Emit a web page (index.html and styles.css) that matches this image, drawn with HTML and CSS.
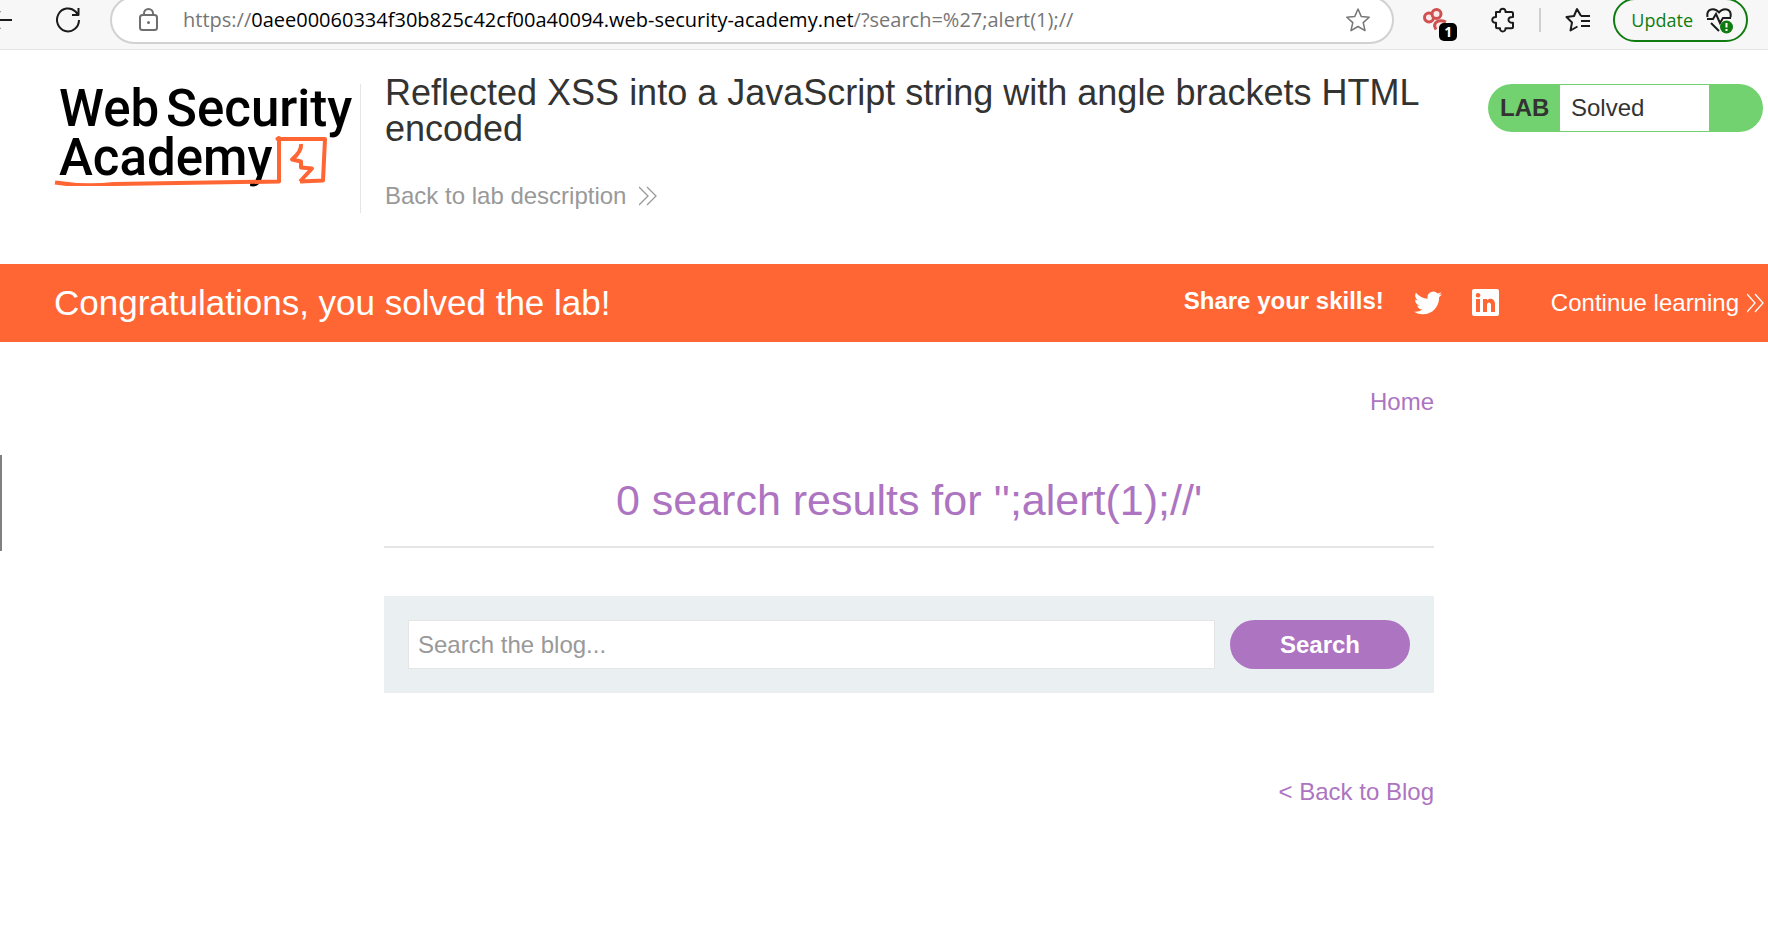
FILE: index.html
```html
<!DOCTYPE html>
<html lang="en">
<head>
<meta charset="utf-8">
<title>Reflected XSS into a JavaScript string with angle brackets HTML encoded</title>
<link rel="stylesheet" href="styles.css">
</head>
<body>
<div class="toolbar">
  <button class="tool back" aria-label="Back"><svg width="24" height="24" viewBox="0 0 24 24"><path d="M23 12H2M11 3l-9 9 9 9"/></svg></button>
  <button class="tool reload" aria-label="Refresh"><svg width="26" height="26" viewBox="0 0 26 26"><path d="M24 13A11 11.500 0 1 1 20.500 4.500L23 7.500M23.500 1v7H17"/></svg></button>
  <div class="address">
    <svg class="lock" width="20" height="24" viewBox="0 0 20 24"><rect x="1" y="7" width="17" height="15" rx="2.500"/><path d="M5 7V5.500a4.500 4.500 0 0 1 9 0V7"/><circle class="dot" cx="9.500" cy="14.500" r="1.500"/></svg>
    <div class="url">https://<span class="host">0aee00060334f30b825c42cf00a40094.web-security-academy.net</span>/?search=%27;alert(1);//</div>
    <button class="tool star" aria-label="Add to favorites"><svg width="26" height="26" viewBox="0 0 26 26"><path d="M13 2l3.200 7.400 8 .8-6 5.400 1.800 8L13 19.500l-7 4.100 1.800-8-6-5.400 8-.8z"/></svg></button>
  </div>
  <button class="tool extension" aria-label="Extension, 1 item"><svg width="36" height="34" viewBox="0 0 36 34"><g class="ext-shape"><path d="M15 26.500C11 20 17 15.500 25 19"/><circle cx="8" cy="14.500" r="4.500"/><circle cx="15.500" cy="11" r="4.500"/></g></svg><span class="count">1</span></button>
  <button class="tool puzzle" aria-label="Extensions"><svg width="24" height="26" viewBox="0 0 24 26"><path d="M5 5h4c-.4-4.500 6-4.500 5.500 0h6c1 0 1.500.5 1.500 1.500V10c-6-.8-6 6.500 0 5.700v4c0 1-.5 1.500-1.500 1.500h-6c.5 4.300-6 4.300-5.500 0H6.500c-1 0-1.500-.5-1.500-1.500v-4c-5 .4-5-6 0-5.700z"/></svg></button>
  <span class="rule"></span>
  <button class="tool favs" aria-label="Favorites"><svg width="26" height="26" viewBox="0 0 26 26"><path d="M16 9l-4-7-3 7-7.500 1 5.500 5.500L5.500 23.500l7-4M16 9h9M16 14h9M16 19h9"/></svg></button>
  <button class="update">Update
    <svg width="28" height="30" viewBox="0 0 28 30"><path d="M1.500 12C0 3 9 2.500 13 7.500 17 2.500 26 3 24.500 12M5 18l8 8M1 14h6l3-5 4 9 3-5h8"/><circle class="alert" cx="20.500" cy="22" r="6.500"/><path class="mark" d="M20.500 18v4.500M20.500 24v2"/></svg>
  </button>
</div>

<header class="lab">
  <a class="logo" href="#" aria-label="Web Security Academy">
    <span class="logo-line"><span>Web</span><span>Security</span></span>
    <span class="logo-line"><span>Academy</span></span>
    <svg class="logo-mark" width="276" height="52" viewBox="0 0 276 52"><path class="sweep" d="M1 48.500Q30 53 60 50L225 47.500V4L223.500 5H271L269 46.500 246 47.500"/><path class="bolt" d="M247 10Q248 17 238 25.500L247 27.500V33.500L258 34.500 246 47.500"/></svg>
  </a>
  <div class="intro">
    <h2>Reflected XSS into a JavaScript string with angle brackets HTML encoded</h2>
    <a class="description" href="#">Back to lab description <svg class="chevrons" width="18" height="20" viewBox="0 0 18 20"><path d="M0 1l9 9-9 9M8 1l9 9-9 9"/></svg></a>
  </div>
  <div class="status"><strong>LAB</strong><p>Solved</p></div>
</header>

<section class="banner">
  <h4>Congratulations, you solved the lab!</h4>
  <div class="share">
    <strong>Share your skills!</strong>
    <a href="#" aria-label="Share on Twitter"><svg width="28" height="28" viewBox="0 0 24 24"><path d="M24 4.600a10 10 0 0 1-2.800.8 5 5 0 0 0 2.100-2.700 10 10 0 0 1-3.100 1.200 4.900 4.900 0 0 0-8.400 4.500A14 14 0 0 1 1.700 3.200a4.900 4.900 0 0 0 1.500 6.500 5 5 0 0 1-2.200-.6v.1a4.900 4.900 0 0 0 3.900 4.800 5 5 0 0 1-2.200.1 4.900 4.900 0 0 0 4.600 3.400A10 10 0 0 1 0 19.500a14 14 0 0 0 7.500 2.200c9.100 0 14-7.500 14-14v-.6A10 10 0 0 0 24 4.600z"/></svg></a>
    <a href="#" aria-label="Share on LinkedIn"><svg width="28" height="28" viewBox="0 0 28 28"><path fill-rule="evenodd" d="M2 0h23q2 0 2 2v23q0 2-2 2H2q-2 0-2-2V2Q0 0 2 0zM4 10v13h4V10zM6 4a2.300 2.300 0 1 0 .1 0zM11 10v13h4v-7c0-3.500 4-3.500 4 0v7h4v-8c0-6-6-6.500-8-3.500V10z"/></svg></a>
  </div>
  <a class="continue" href="#">Continue learning <svg class="chevrons" width="18" height="20" viewBox="0 0 18 20"><path d="M0 1l8 9-8 9M8 1l8 9-8 9"/></svg></a>
</section>

<main class="page">
  <span class="edge"></span>
  <div class="content">
    <nav class="links"><a href="#">Home</a></nav>
    <h1>0 search results for '';alert(1);//'</h1>
    <form class="search">
      <input type="text" placeholder="Search the blog..." aria-label="Search the blog">
      <button type="button">Search</button>
    </form>
    <nav class="links blog"><a href="#">&lt; Back to Blog</a></nav>
  </div>
</main>
</body>
</html>
```
FILE: styles.css
```css
* { box-sizing: border-box; }
body {
  margin: 0;
  background: #fff;
  color: #333332;
  font-family: "Liberation Sans", Arial, sans-serif;
  font-size: 24px;
  line-height: 28px;
}
h1, h2, h4, p { margin: 0; font-weight: 400; }
a { text-decoration: none; color: inherit; }
button { font: inherit; border: 0; padding: 0; background: none; }
svg { display: block; flex: none; }

/* Browser toolbar */
.toolbar {
  display: flex;
  align-items: center;
  height: 50px;
  padding-right: 20px;
  padding-bottom: 9px;
  background: #f7f7f7;
  border-bottom: 1px solid #e5e5e5;
  overflow: hidden;
}
.tool { flex: none; position: relative; }
.tool svg, .lock { fill: none; stroke: #1b1b1b; stroke-width: 2; stroke-linejoin: round; }
.back { margin-left: -11px; }
.reload { margin-left: 42px; }
.address {
  display: flex;
  flex: 1;
  align-items: center;
  min-width: 0;
  height: 48px;
  margin-left: 29px;
  padding: 0 21px 0 27px;
  background: #fff;
  border: 2px solid #d1d1d1;
  border-radius: 24px;
}
.lock { stroke: #6e6e6e; }
.lock .dot { fill: #6e6e6e; stroke: none; }
.url {
  flex: 1;
  margin-left: 24px;
  color: #767676;
  font-family: "Open Sans", "Noto Sans", sans-serif;
  font-size: 20px;
  white-space: nowrap;
}
.host { color: #000; }
.tool.star svg { stroke: #767676; stroke-width: 1.5; }
.extension { margin-left: 27px; }
.extension .ext-shape { fill: #fbeaea; stroke: #cf5050; stroke-width: 3; }
.count {
  position: absolute;
  right: 0;
  bottom: -4px;
  width: 18px;
  height: 18px;
  border-radius: 5px;
  background: #000;
  color: #fff;
  font: 700 14px/18px "Open Sans", sans-serif;
}
.puzzle { margin-left: 34px; }
.rule { flex: none; width: 2px; height: 24px; margin: 0 24px; background: #d0d0d0; }
.update {
  display: flex;
  flex: none;
  align-items: center;
  gap: 13px;
  height: 44px;
  margin-left: 22px;
  padding: 0 12px 0 16px;
  border: 2px solid #107c10;
  border-radius: 22px;
  color: #107c10;
  font-family: "Open Sans", "Noto Sans", sans-serif;
  font-size: 18px;
}
.update svg { fill: none; stroke: #1b1b1b; stroke-width: 2; }
.update .alert { fill: #107c10; stroke: none; }
.update .mark { stroke: #fff; }

/* Lab header */
.lab { display: flex; align-items: flex-start; min-height: 214px; padding: 24px 5px 0 54px; }
.logo {
  flex: none;
  position: relative;
  width: 307px;
  height: 129px;
  margin-top: 10px;
  border-right: 1px solid #e5e5e5;
  color: #000;
  font-family: Roboto, sans-serif;
  font-size: 51px;
  font-weight: 500;
  line-height: 49px;
}
.logo-line { display: flex; gap: 7px; padding-left: 5px; }
.logo-mark { position: absolute; left: 0; top: 50px; fill: none; stroke: #ff6633; stroke-width: 4; stroke-linejoin: round; }
.intro { flex: 1; padding: 1px 24px 0; }
.intro h2 { font-size: 36px; line-height: 36px; }
.description {
  display: flex;
  align-items: center;
  gap: 13px;
  margin-top: 35px;
  color: #999;
}
.chevrons { fill: none; stroke: currentColor; stroke-width: 1.3; }
.status {
  display: flex;
  flex: none;
  width: 275px;
  height: 48px;
  margin-top: 10px;
  padding: 1px 54px 1px 12px;
  border-radius: 24px;
  background: #71d26f;
  line-height: 46px;
}
.status strong { width: 60px; }
.status p { flex: 1; padding-left: 11px; background: #fff; }

/* Solved banner */
.banner {
  display: flex;
  align-items: center;
  min-height: 78px;
  padding: 0 3px 0 54px;
  background: #ff6633;
  color: #fff;
}
.banner h4 { flex: 1; font-size: 35px; line-height: 40px; }
.share { display: flex; align-items: center; gap: 30px; margin-right: 51px; }
.share strong { padding-bottom: 4px; }
.share svg { fill: #fff; }
.continue { display: flex; align-items: center; gap: 8px; }

/* Blog page */
.page { position: relative; padding: 46px 0 40px 50px; }
.edge { position: absolute; left: 0; top: 113px; width: 2px; height: 96px; background: #808080; }
.content { max-width: 1050px; margin: 0 auto; color: #ad74c1; }
.links { display: flex; justify-content: flex-end; }
h1 {
  margin-top: 58px;
  padding-bottom: 20px;
  border-bottom: 2px solid #e5e5e5;
  font-size: 43px;
  line-height: 52px;
  text-align: center;
}
.search {
  display: flex;
  gap: 15px;
  margin-top: 48px;
  padding: 24px;
  background: #eaeff2;
}
.search input {
  flex: 1;
  min-width: 0;
  height: 49px;
  padding: 0 9px;
  border: 1px solid #e5e5e5;
  background: #fff;
  color: #333332;
  font: inherit;
}
.search input::placeholder { color: #999; opacity: 1; }
.search button {
  width: 180px;
  border-radius: 25px;
  background: #ad74c1;
  color: #fff;
  font-weight: 700;
}
.blog { margin-top: 85px; }
```
